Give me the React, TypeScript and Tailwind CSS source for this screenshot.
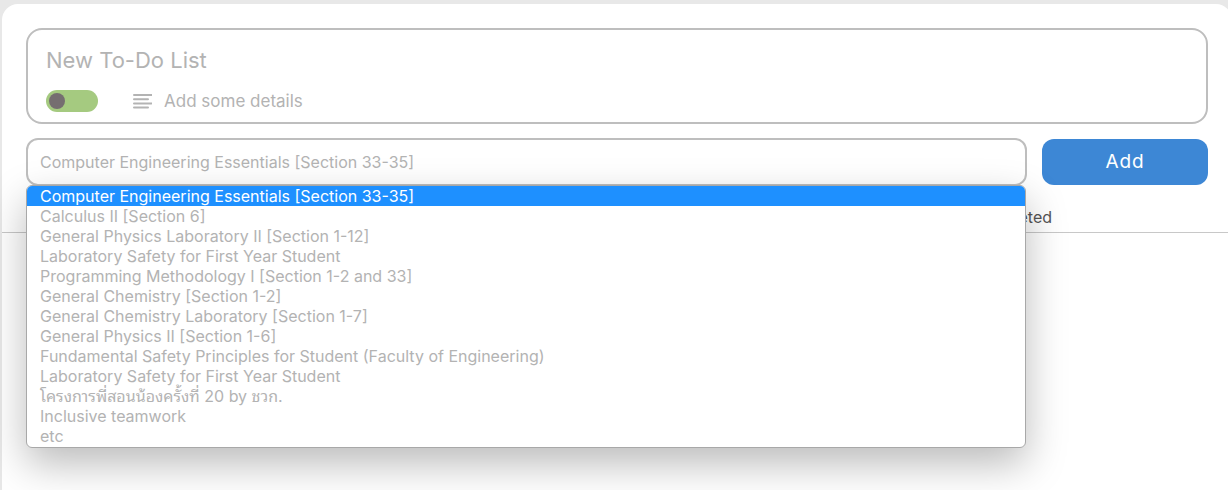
import { useState } from "react";

const courses = [
  "Computer Engineering Essentials [Section 33-35]",
  "Calculus II [Section 6]",
  "General Physics Laboratory II [Section 1-12]",
  "Laboratory Safety for First Year Student",
  "Programming Methodology I [Section 1-2 and 33]",
  "General Chemistry [Section 1-2]",
  "General Chemistry Laboratory [Section 1-7]",
  "General Physics II [Section 1-6]",
  "Fundamental Safety Principles for Student (Faculty of Engineering)",
  "Laboratory Safety for First Year Student",
  "โครงการพี่สอนน้องครั้งที่ 20 by ชวก.",
  "Inclusive teamwork",
  "etc",
];

function DetailsIcon() {
  return (
    <svg width="20" height="16" viewBox="0 0 20 16" fill="none" stroke="#b3b3b3" strokeWidth="2" strokeLinecap="round" aria-hidden="true">
      <path d="M2 2h17.5M2 6.2h14M2 10.4h17.5M2 14.6h14" />
    </svg>
  );
}

function TodoFields() {
  return (
    <div className="flex flex-col rounded-2xl border-2 border-[#bebebe] px-[18px] pt-4 pb-2">
      <input
        aria-label="Title"
        placeholder="New To-Do List"
        className="h-7 w-full bg-transparent text-[22px] leading-7 outline-none placeholder:text-[#b3b3b3]"
      />
      <div className="mt-3.5 flex h-[26px] items-center">
        <input
          type="checkbox"
          role="switch"
          aria-label="Priority"
          className="flex h-[22px] w-[52px] shrink-0 appearance-none items-center rounded-full bg-[#a5ca80] px-[3px] before:size-4 before:rounded-full before:bg-[#756e70] checked:justify-end"
        />
        <label className="ml-[34px] flex flex-1 items-center gap-3">
          <DetailsIcon />
          <input
            aria-label="Details"
            placeholder="Add some details"
            className="h-6 flex-1 bg-transparent text-[17px] leading-6 outline-none placeholder:text-[#b3b3b3]"
          />
        </label>
      </div>
    </div>
  );
}

function CoursePicker() {
  const [selected, setSelected] = useState(0);
  return (
    <div className="relative flex-1">
      <select
        aria-label="Course"
        value={selected}
        onChange={(e) => setSelected(Number(e.target.value))}
        className="block h-12 w-full appearance-none rounded-xl border-2 border-[#bebebe] bg-white px-3 text-base text-[#b3b3b3] outline-none"
      >
        {courses.map((course, i) => (
          <option key={i} value={i}>
            {course}
          </option>
        ))}
      </select>
      <ul
        role="listbox"
        aria-label="Courses"
        className="absolute inset-x-0 top-full z-10 -mt-px mr-px overflow-hidden rounded-md border border-[#a8a8a8] bg-white pb-px shadow-[0_16px_40px_rgba(0,0,0,0.27)]"
      >
        {courses.map((course, i) => (
          <li
            key={i}
            role="option"
            aria-selected={i === selected}
            onClick={() => setSelected(i)}
            className={
              i === selected
                ? "h-5 bg-[#1e90ff] px-[13px] text-base leading-5 text-white"
                : "h-5 px-[13px] text-base leading-5 text-[#b3b3b3]"
            }
          >
            {course}
          </li>
        ))}
      </ul>
    </div>
  );
}

export default function App() {
  return (
    <div className="min-h-screen overflow-hidden bg-[#e8e8e8] pt-1 pl-0.5 font-['Inter','Noto_Sans_Thai_Looped','Loma','Waree','Garuda','Umpush','Tlwg_Typo',sans-serif]">
      <main className="-mr-1 min-h-screen rounded-t-2xl bg-white">
        <form className="px-6 pt-6" onSubmit={(e) => e.preventDefault()}>
          <TodoFields />
          <div className="mt-3.5 flex items-center gap-[15px]">
            <CoursePicker />
            <button type="submit" className="h-[46px] w-[166px] rounded-xl bg-[#3d87d5] text-[19px] tracking-wider text-white">
              Add
            </button>
          </div>
        </form>
        <nav className="mt-5 flex justify-end border-b border-[#c8c8c8] pr-[180px] pb-1">
          <a href="#completed" className="text-base leading-[22px] text-[#555555]">
            Completed
          </a>
        </nav>
      </main>
    </div>
  );
}
